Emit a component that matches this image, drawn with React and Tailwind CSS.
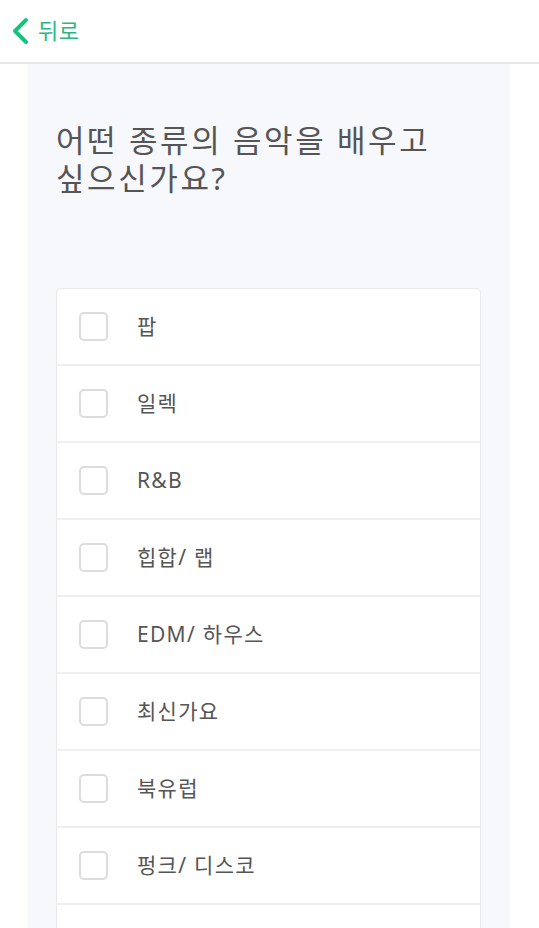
import React, { useState } from 'react';

const GENRES = ['팝', '일렉', 'R&B', '힙합/ 랩', 'EDM/ 하우스', '최신가요', '북유럽', '펑크/ 디스코', '재즈'];

const font = { fontFamily: '"Noto Sans", "Noto Sans CJK KR", sans-serif' };

const App = () => {
  const [checked, setChecked] = useState({});

  const toggle = (g) => setChecked((prev) => ({ ...prev, [g]: !prev[g] }));

  return (
    <div className="w-[539px] h-[928px] overflow-hidden bg-white flex flex-col" style={font}>
      {/* Header */}
      <div className="h-[64px] shrink-0 border-b-2 border-[#e6e6e8] bg-white flex items-center pl-[11px]">
        <button className="flex items-center gap-[8px]">
          <svg width="19" height="28" viewBox="0 0 19 28" fill="none">
            <path d="M15 3 L4 14 L15 25" stroke="#16c27d" strokeWidth="4" strokeLinecap="round" strokeLinejoin="round" />
          </svg>
          <span className="text-[22px] leading-none text-[#2cb77f] mt-[-2px] tracking-[0.5px]">뒤로</span>
        </button>
      </div>

      {/* Body */}
      <div className="flex-1 mx-[27px] w-[483px] bg-[#f7f8fb] px-[29px] pt-[57px]">
        <h1 className="text-[31px] leading-[38px] text-[#555555] font-normal tracking-[2.6px]">
          어떤 종류의 음악을 배우고
          <br />
          싶으신가요?
        </h1>

        <div className="mt-[91px] bg-white border border-[#e8e9ec] rounded-[5px]">
          {GENRES.map((g, i) => (
            <div
              key={g}
              onClick={() => toggle(g)}
              className={`flex items-center pl-[22px] cursor-pointer ${i > 0 ? 'h-[77px] border-t-2 border-[#eeeff2]' : 'h-[75px]'}`}
            >
              <div
                className={`w-[29px] h-[29px] shrink-0 rounded-[5px] border-2 ${
                  checked[g] ? 'border-[#16c27d] bg-[#16c27d]' : 'border-[#dcdcdc] bg-white'
                }`}
              />
              <span className="ml-[29px] text-[21px] tracking-[1.3px] text-[#555555]">{g}</span>
            </div>
          ))}
        </div>
      </div>
    </div>
  );
};

export default App;
